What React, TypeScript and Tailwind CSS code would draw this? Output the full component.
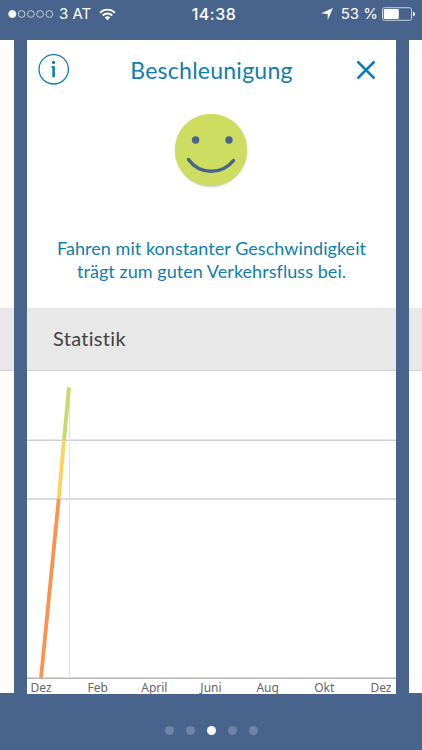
const months = ['Dez', 'Feb', 'April', 'Juni', 'Aug', 'Okt', 'Dez'];

function StatusBar() {
  return (
    <header className="grid h-10 shrink-0 grid-cols-[1fr_auto_1fr] px-2 font-['Inter','Liberation_Sans',sans-serif] text-white">
      <div className="flex h-7 items-center">
        <svg className="h-2 w-[46px]" viewBox="0 0 46 8" fill="none" stroke="#dce3ec" strokeWidth="0.8">
          <circle cx="4.3" cy="4" r="3.6" fill="white" stroke="white" />
          <circle cx="13.6" cy="4" r="3.4" />
          <circle cx="22.9" cy="4" r="3.4" />
          <circle cx="32.1" cy="4" r="3.4" />
          <circle cx="41.4" cy="4" r="3.4" />
        </svg>
        <span className="ml-[5px] text-[15px] leading-7 whitespace-nowrap">3 AT</span>
        <svg className="ml-2 h-[13px] w-[17px]" viewBox="0 0 17 13" fill="none" stroke="white" strokeWidth="1.9">
          <path d="M1 4.7a10.7 10.7 0 0 1 15 0" />
          <path d="M3.7 7.5a6.9 6.9 0 0 1 9.6 0" />
          <path d="M8.5 12.3 5.7 9.5a4 4 0 0 1 5.6 0z" fill="white" stroke="none" />
        </svg>
      </div>
      <time className="pl-[6px] text-[16px] leading-7 font-medium tracking-[0.5px]">14:38</time>
      <div className="flex h-7 items-center justify-end">
        <svg className="h-3 w-3" viewBox="0 0 12 12" fill="white">
          <path d="M12 0 6.7 12V6.1L0 5.3z" />
        </svg>
        <span className="ml-2 text-[15px] leading-7 whitespace-nowrap">53 %</span>
        <svg className="ml-1 -mr-px h-[14px] w-[33px]" viewBox="0 0 33 14">
          <rect x="0.5" y="0.7" width="29" height="12.6" rx="2" fill="none" stroke="#c5cfdd" />
          <rect x="1.8" y="2" width="15" height="10" rx="1" fill="white" />
          <path d="M31 4.7q2 .5 2 2.3T31 9.3z" fill="white" />
        </svg>
      </div>
    </header>
  );
}

function SidePanel() {
  return (
    <div className="h-[653px] bg-white pt-[268px]">
      <div className="h-[63px] border-b border-[#d0d0d0] bg-[#e8e8e8]" />
    </div>
  );
}

function Smiley() {
  return (
    <svg className="mr-[2px] h-[78px] w-[78px]" viewBox="0 0 78 78" fill="none">
      <circle cx="39" cy="40.5" r="36" fill="#ddd9e3" />
      <circle cx="39" cy="39" r="36.3" fill="#ccdd61" />
      <circle cx="23.6" cy="29" r="3.7" fill="#49648c" />
      <circle cx="57" cy="29" r="3.7" fill="#49648c" />
      <path d="M16.5 48.5C27.5 64 50 64 61.5 49.5" stroke="#49648c" strokeWidth="3.5" strokeLinecap="round" />
    </svg>
  );
}

function Chart() {
  return (
    <svg className="h-[308px] w-full shrink-0" viewBox="0 0 369 308" fill="none">
      <path d="M0 69.3h369M0 128h369" stroke="#cfcfcf" strokeWidth="1.4" />
      <path d="M0 307.3h369" stroke="#b5b5b5" strokeWidth="1.4" />
      <path d="M42.5 16v291" stroke="#e2e2e2" />
      <g strokeWidth="3.8">
        <path d="M14 307 31.7 128" stroke="#fb924f" />
        <path d="M31.7 128 37 69" stroke="#ffd160" />
        <path d="M37 69 42 16.5" stroke="#c8da68" />
      </g>
    </svg>
  );
}

export default function App() {
  return (
    <div className="flex h-[750px] w-[422px] flex-col overflow-hidden bg-[#49648c]">
      <StatusBar />

      <main className="grid h-[654px] shrink-0 grid-cols-[14px_369px_13px] gap-x-[13px]">
        <SidePanel />
        <section className="flex h-[654px] flex-col bg-white font-['Lato',sans-serif] text-[#0e7eae] [font-variant-ligatures:none]">
          <div className="flex h-[60px] shrink-0 items-center justify-between pr-5 pl-[11px]">
            <svg className="h-8 w-8" viewBox="0 0 32 32" fill="none" stroke="currentColor">
              <circle cx="15.7" cy="15.3" r="14.7" strokeWidth="1.3" />
              <path d="M15.6 12.2v11" strokeWidth="2.6" />
              <path d="M13.4 12.9h2.4" strokeWidth="1.4" />
              <circle cx="15.5" cy="8.4" r="1.6" fill="currentColor" stroke="none" />
            </svg>
            <h1 className="mr-[3px] text-[23px] leading-[58px] tracking-[0.25px]">Beschleunigung</h1>
            <svg className="h-5 w-5" viewBox="0 0 20 20" fill="none" stroke="currentColor" strokeWidth="2.5">
              <path d="m1.5 1.5 17 17m0-17-17 17" />
            </svg>
          </div>

          <div className="flex h-[208px] shrink-0 flex-col items-center pt-[11px]">
            <Smiley />
            <p className="mt-[48px] text-center text-[18px] leading-[23px] tracking-[0.05px] whitespace-nowrap">
              Fahren mit konstanter Geschwindigkeit
              <br />
              trägt zum guten Verkehrsfluss bei.
            </p>
          </div>

          <h2 className="h-[63px] shrink-0 border-b border-[#d0d0d0] bg-[#e8e8e8] pl-[26px] text-[20px] leading-[61px] tracking-[0.3px] text-[#414141]">
            Statistik
          </h2>

          <Chart />
          <div className="flex h-[15px] justify-between pr-[15px] pl-[14px] font-['Noto_Sans',sans-serif] text-[12px] leading-[18px] text-[#666]">
            {months.map((month, index) => (
              <span key={index} className="flex w-0 justify-center">
                {month}
              </span>
            ))}
          </div>
        </section>
        <SidePanel />
      </main>

      <nav className="flex flex-1 items-start justify-center gap-3 pt-[32px]">
        {[0, 1, 2, 3, 4].map((page) => (
          <span
            key={page}
            className={page === 2 ? 'size-[9px] rounded-full bg-white' : 'size-[9px] rounded-full bg-[#7085a5]'}
          />
        ))}
      </nav>
    </div>
  );
}
